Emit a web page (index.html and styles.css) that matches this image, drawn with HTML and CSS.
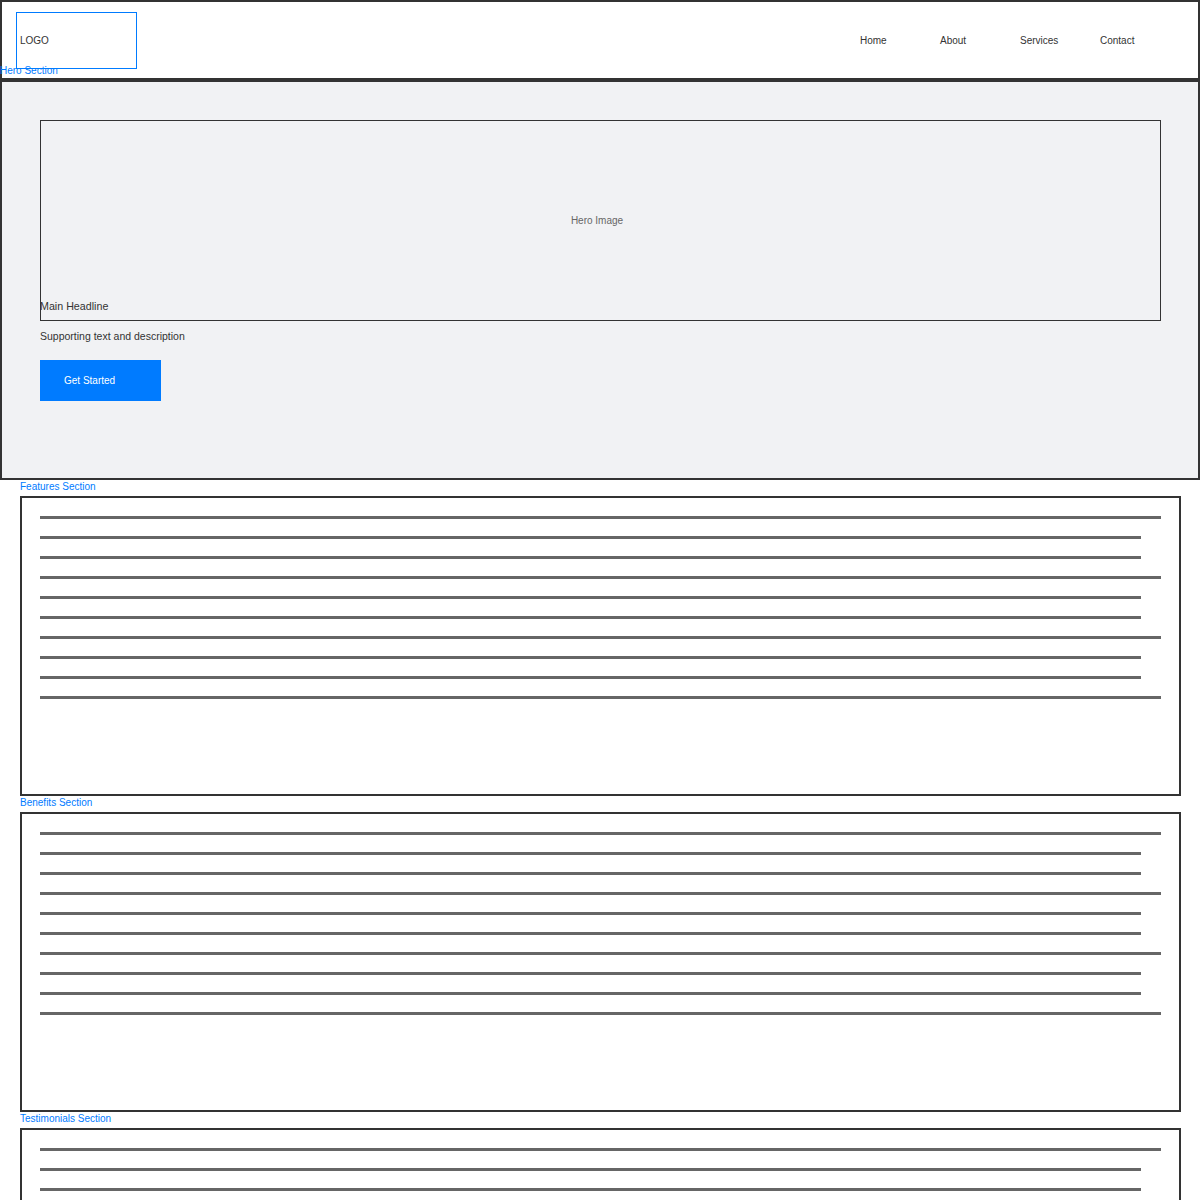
FILE: index.html
```html
<!DOCTYPE html>
<html lang="en">
<head>
<meta charset="utf-8">
<title>Wireframe</title>
<link rel="stylesheet" href="styles.css">
</head>
<body>
<header class="site-header">
  <div class="logo">LOGO</div>
  <nav class="nav">
    <a class="nav-link" href="#">Home</a>
    <a class="nav-link" href="#">About</a>
    <a class="nav-link" href="#">Services</a>
    <a class="nav-link" href="#">Contact</a>
  </nav>
</header>

<section class="hero">
  <span class="section-label hero-label">Hero Section</span>
  <div class="hero-image">Hero Image</div>
  <h1 class="headline">Main Headline</h1>
  <p class="subtext">Supporting text and description</p>
  <a class="cta" href="#">Get Started</a>
</section>

<section class="block">
  <div class="section-label">Features Section</div>
  <div class="panel">
    <div class="line"></div>
    <div class="line short"></div>
    <div class="line short"></div>
    <div class="line"></div>
    <div class="line short"></div>
    <div class="line short"></div>
    <div class="line"></div>
    <div class="line short"></div>
    <div class="line short"></div>
    <div class="line"></div>
  </div>
</section>

<section class="block">
  <div class="section-label">Benefits Section</div>
  <div class="panel">
    <div class="line"></div>
    <div class="line short"></div>
    <div class="line short"></div>
    <div class="line"></div>
    <div class="line short"></div>
    <div class="line short"></div>
    <div class="line"></div>
    <div class="line short"></div>
    <div class="line short"></div>
    <div class="line"></div>
  </div>
</section>

<section class="block">
  <div class="section-label">Testimonials Section</div>
  <div class="panel">
    <div class="line"></div>
    <div class="line short"></div>
    <div class="line short"></div>
    <div class="line"></div>
    <div class="line short"></div>
    <div class="line short"></div>
    <div class="line"></div>
    <div class="line short"></div>
    <div class="line short"></div>
    <div class="line"></div>
  </div>
</section>
</body>
</html>
```

FILE: styles.css
```css
* {
  box-sizing: border-box;
  margin: 0;
  padding: 0;
}

body {
  margin: 0;
  width: 1200px;
  background: #ffffff;
  color: #333333;
  font-family: "Liberation Sans", Arial, sans-serif;
  font-size: 10px;
}

.site-header {
  display: flex;
  align-items: flex-start;
  height: 80px;
  border: 2px solid #333333;
  padding: 10px 18px 0 14px;
}

.logo {
  display: flex;
  align-items: center;
  width: 121px;
  height: 57px;
  border: 1px solid #007bff;
  padding-left: 3px;
  line-height: 13px;
  color: #333333;
}

.nav {
  display: flex;
  height: 57px;
  margin-left: auto;
}

.nav-link {
  display: flex;
  align-items: center;
  width: 80px;
  line-height: 13px;
  color: #333333;
  text-decoration: none;
}

.hero {
  position: relative;
  height: 400px;
  border: 2px solid #333333;
  background: #f1f2f4;
  padding: 38px 37px 0 38px;
}

.section-label {
  display: block;
  height: 16px;
  line-height: 13px;
  padding-bottom: 3px;
  color: #007bff;
  white-space: nowrap;
}

.hero-label {
  position: absolute;
  left: -2px;
  top: -18px;
}

.hero-image {
  display: flex;
  align-items: center;
  justify-content: center;
  height: 201px;
  border: 1px solid #333333;
  padding-right: 7px;
  color: #666666;
  line-height: 13px;
}

.headline {
  margin-top: -23px;
  font-size: 10.7px;
  font-weight: normal;
  line-height: 16px;
  color: #333333;
}

.subtext {
  margin-top: 14px;
  font-size: 10.5px;
  line-height: 16px;
  color: #333333;
}

.cta {
  display: flex;
  align-items: center;
  width: 121px;
  height: 41px;
  margin-top: 16px;
  padding-left: 24px;
  background: #007bff;
  color: #ffffff;
  line-height: 13px;
  text-decoration: none;
}

.block .section-label {
  padding-left: 20px;
}

.panel {
  display: flex;
  flex-direction: column;
  gap: 17px;
  width: 1161px;
  height: 300px;
  margin-left: 20px;
  border: 2px solid #333333;
  padding: 18px;
}

.line {
  flex: none;
  width: 1121px;
  height: 3px;
  background: #666666;
}

.line.short {
  width: 1101px;
}
```
